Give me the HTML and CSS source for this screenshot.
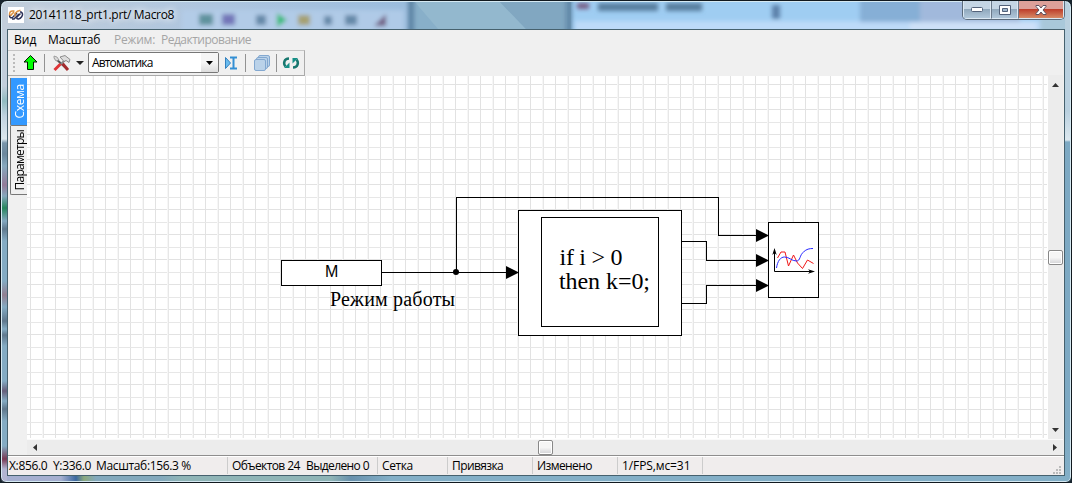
FILE: index.html
```html
<!DOCTYPE html>
<html lang="ru">
<head>
<meta charset="utf-8">
<title>20141118_prt1.prt/ Macro8</title>
<link rel="stylesheet" href="styles.css">
</head>
<body>
<div class="window">
  <header class="titlebar">
    <svg class="app-icon" width="16" height="16" viewBox="0 0 16 16"><rect width="16" height="16" fill="#fff"/><g fill="none" stroke-width="1.500"><path d="M6.500 4H4.500C2.500 4 1.500 5.500 1.500 7.500S2.500 9 4 7l2-2" stroke="#db9142"/><path d="M1.500 8.500c0 2 1.500 3 3.500 1.500l4-4M4 12h2l5-5" stroke="#2b3158"/><path d="M7 9.500V6.500Q10 3 12.500 3.500" stroke="#db9142"/><path d="M12 5h1c2 1 2 3 .5 5S9 13 8.500 10.500M12.500 6.500l-4 4" stroke="#2b3158"/></g></svg>
    <span class="title">20141118_prt1.prt/ Macro8</span>
    <svg class="reflection" width="1058" height="27" viewBox="7 2 1058 27">
      <path d="M410 1h165v28H410z" fill="#88afc9"/>
      <path d="M414 1h85l27 28h-88z" fill="#93b8ce"/>
      <path d="M499 1h67v28h-40z" fill="#81a7c1"/>
      <path d="M571 1h494v28H571z" fill="#9fcdf2"/>
      <g filter="url(#soft)"><path d="M566 -4h6v38h-6zM408 -4h6v38h-6z" fill="#5f86a6"/><path d="M182 10h222v24H182z" fill="#b4cdea" opacity=".8"/><path d="M575 21h490v12H575z" fill="#bddaf8"/><path d="M577 3h12v6h-12z" fill="#775f86"/><path d="M598 3h60v8h-60zM666 3h36v8h-36z" fill="#587f9f"/><path d="M860 -3h60v25h-60z" fill="#86afd6"/><path d="M920 -3h100v25h-100z" fill="#a1b9dc"/><path d="M1040 -3h30v36h-30z" fill="#a9c8da"/><path d="M910 22h126v9H910z" fill="#cee1f8"/><path d="M772 5h8v14h-8z" fill="#5d82ab"/><path d="M199 14h14v11h-14z" fill="#5f929d"/><path d="M222 14h13v11h-13z" fill="#7376b8"/><path d="M256 15h10v10h-10zM324 16h8v9h-8zM345 15h12v10h-12z" fill="#6588a8"/><path d="M277 13l10 7-10 7z" fill="#30bb78"/><path d="M298 15h12v10h-12z" fill="#a6a070"/><path d="M374 26l12-12v12z" fill="#705c81"/></g>
      <filter id="soft" x="-5%" y="-50%" width="110%" height="200%"><feGaussianBlur stdDeviation="2"/></filter>
    </svg>
    <div class="controls">
      <span class="ctl"><svg width="12" height="5"><rect x=".5" y=".5" width="11" height="4" rx="1" fill="#fff" stroke="#53627a"/></svg></span>
      <span class="ctl"><svg width="12" height="10"><path d="M.5.5h11v9H.5z" fill="#fff" stroke="#53627a"/><path d="M3.500 3.500h5v3h-5z" fill="#9fb7cc" stroke="#53627a"/></svg></span>
      <span class="ctl close"><svg width="12" height="10" viewBox="0 0 12 10"><path d="M1 .5h3L6 3 8 .5h3v1L8 5l3 3.500v1H8L6 7 4 9.500H1v-1L4 5 1 1.500z" fill="#fff" stroke="#5d5260"/></svg></span>
    </div>
  </header>
  <main class="client">
    <nav class="menu"><span class="m-view">Вид</span><span class="m-scale">Масштаб</span><span class="muted m-mode">Режим:</span><span class="muted m-edit">Редактирование</span></nav>
    <div class="toolbar">
      <i class="grip"></i>
      <svg class="tools" width="297" height="24" viewBox="8 51 297 24">
        <path d="M30.500 55.500 37 62h-3.500v7.500h-6V62H24z" fill="#0f0" stroke="#001800" stroke-linejoin="round"/>
        <path d="M44.500 54v18M245.500 54v18M276.500 54v18" stroke="#929292"/>
        <path d="M55 58l12 11" stroke="#555" stroke-width="2"/><path d="M54 56l3 1 2 3-3 1-2-3z" fill="#d9d9d9" stroke="#888" stroke-width=".7"/>
        <path d="M62 63l6 7" stroke="#a42b2d" stroke-width="3"/><path d="M65 60 61 64" stroke="#888" stroke-width="2"/><path d="M54.500 70l6-6" stroke="#df3437" stroke-width="3"/>
        <path d="M60 57l5-1.500 5 4-1 3-3-2-2 1z" fill="#ddd" stroke="#777" stroke-width=".8"/>
        <path d="M76 61h8l-4 4z" fill="#222"/>
        <path d="M225.500 57.500v11l5-5.500z" fill="#69bbee" stroke="#3380bd"/><path d="M230 57.500h7M230 68.500h7M233.500 58v11" stroke="#338fd4" stroke-width="2" fill="none"/>
        <g fill="#bad2e9" stroke="#83a8d0"><rect x="258.500" y="55.500" width="11" height="11" rx="1.500"/><rect x="256.500" y="57.500" width="11" height="11" rx="1.500"/><rect x="254.500" y="59.500" width="11" height="11" rx="1.500"/></g>
        <g fill="none" stroke="#17776f" stroke-width="2.500"><path d="M289 58.500c-5 0-6 5-3.500 8M293 67.500c5 0 6-5 3.500-8"/></g><path d="M284 68h5.500v-5.500zM298 58h-5.500v5.500z" fill="#159087"/>
      </svg>
      <div class="combo"><span>Автоматика</span><b><svg width="7" height="4"><path d="M0 0h7L3.500 4z"/></svg></b></div>
    </div>
    <section class="workspace">
      <aside class="tabs"><div class="tab active"><span>Схема</span></div><div class="tab"><span>Параметры</span></div></aside>
      <svg class="canvas" width="1021" height="363" viewBox="27 76 1021 363">
        <defs><pattern id="grid" x="30" y="84" width="25" height="25" patternUnits="userSpaceOnUse"><path d="M0 0h1v25H0zM0 0h25v1H0z" fill="#e2e2e2"/><path d="M13 0h1v25h-1zM0 13h25v1H0z" fill="#e7e7e7"/><path d="M12 0h1v25h-1z" fill="#f6f6f6"/></pattern></defs>
        <rect x="27" y="76" width="1021" height="363" fill="#fff"/><rect x="27" y="76" width="1020" height="362" fill="url(#grid)"/>
        <g fill="#fff" stroke="#000" shape-rendering="crispEdges"><path d="M281.500 260.500h100v25h-100zM518.500 210.500h163v125h-163zM541.500 217.500h117v109h-117zM768.500 222.500h50v75h-50z"/><path fill="none" d="M381.500 272.500h125M456.500 272.500v-75h262v38h38M681.500 241.500h25v19h50M681.500 303.500h25v-18h50"/></g>
        <path d="M506 266v13l13-6.500zM756 229v13l13-6.500zM756 254v13l13-6.500zM756 279v13l13-6.500z"/><circle cx="456" cy="272" r="3"/>
        <g fill="none"><path d="M777.500 258l3.500-6h4l3.500 14 5-11 4 8 5 5.500 5-8.500 6 3.500" stroke="#f01818"/><path d="M776.500 268c1-7 4-11 8-11 5 0 7 4 12 4 4 0 3-6 7-9 3-3 6-3.500 9.500-3.500" stroke="#2828ff"/><path d="M774.500 250v21.500H812" stroke="#000"/></g><path d="M774.500 248l2.200 7-2.200-2-2.200 2zM815 271.500l-7 2.200 2-2.200-2-2.200z"/>
        <text class="letter" x="325" y="277">M</text><text class="caption" x="330" y="306" textLength="125">Режим работы</text><text class="code" x="559.500" y="265" textLength="63">if i &gt; 0</text><text class="code" x="559" y="289" textLength="91">then k=0;</text>
      </svg>
      <div class="scroll vertical"><svg width="7" height="4"><path d="M0 4h7L3.500 0z" fill="#333"/></svg><i></i><svg width="7" height="4"><path d="M0 0h7L3.500 4z" fill="#333"/></svg></div>
      <div class="scroll horizontal"><svg width="4" height="7"><path d="M4 0v7L0 3.500z" fill="#333"/></svg><i></i><svg width="4" height="7"><path d="M0 0v7l4-3.500z" fill="#333"/></svg></div>
    </section>
    <footer class="status">
      <div class="s-pos"><span class="s-x">X:856.0</span><span class="s-y">Y:336.0</span><span class="s-scale">Масштаб:156.3 %</span></div>
      <div class="s-count"><span class="s-obj">Объектов 24</span><span class="s-sel">Выделено 0</span></div>
      <div class="s-grid">Сетка</div><div class="s-snap">Привязка</div><div class="s-mod">Изменено</div><div class="s-fps">1/FPS,мс=31</div>
      <svg class="resize" width="8" height="8"><path d="M6 0h2v2H6zM3 3h2v2H3zM6 3h2v2H6zM0 6h2v2H0zM3 6h2v2H3zM6 6h2v2H6z" fill="#bbb"/></svg>
    </footer>
  </main>
</div>
</body>
</html>
```
FILE: styles.css
```css
* { box-sizing: border-box; }
body { margin: 0; background: #17242d; font: 12px "Open Sans", "Noto Sans", sans-serif; color: #000; overflow: hidden; }
svg { display: block; flex: none; }
span { white-space: nowrap; }
.window {
  width: 1072px; height: 483px; padding: 0 6px 6px; border: 1px solid #11191f; border-radius: 7px 7px 6px 6px;
  box-shadow: inset 0 0 0 1px #d5e9f2;
  background:
    linear-gradient(#c2cedb 0 85px, #92bbc0 100px, #c0d2df 115px, #dce8ee 138px, #7895aa 142px, #6b879c 153px, #86a8bd 165px, #937b98 184px, #86a8bd 195px, #27855d 207px, #83a7bf 220px, #60798e 228px, #84abc3 240px 280px, #927f91 294px, #84abc3 306px, #60788d 320px, #84abc3 328px, #60788d 334px, #84abc3 345px 380px, #675f7b 390px, #84abc3 400px, #60788d 408px, #84abc3 420px 445px, #783954 458px, #b1b5d2 468px) 0 0 / 6px 100% no-repeat,
    linear-gradient(90deg, #a5afd0 0 60px, #3c68a0 75px, #8ba87d 83px, #84a9bd 95px 160px, #8fb4b6 180px 330px, #6991ad 350px, #83afc7 390px) 0 100% / 100% 6px no-repeat,
    linear-gradient(#b9d0df 0 110px, #dce8ef 139px, #7da9c3 141px 420px, #83afc7);
}
.titlebar { height: 27px; display: flex; align-items: flex-start; position: relative; isolation: isolate; margin-top: 1px; background: linear-gradient(90deg, #c2cedb, #adc5df 20%, #9bbddd 37%); }
.app-icon { margin: 5px 0 0 1px; }
.title { margin: 4px 0 0 5px; line-height: 17px; letter-spacing: -.31px; text-shadow: 0 0 7px #fff, 0 0 9px #fff; }
.reflection { position: absolute; left: 0; top: 0; z-index: -1; }
.controls { margin: -1px 0 0 auto; width: 103px; height: 19px; display: flex; border: 1px solid #5b6b7b; border-top: 0; border-radius: 0 0 5px 5px; overflow: hidden; }
.ctl { width: 28px; height: 18px; display: flex; align-items: center; justify-content: center; border: 1px solid #dbe8f3; border-top: 0; background: linear-gradient(#c4d5e4 48%, #91a9bd 50%, #b0c7da); }
.ctl + .ctl { border-left-color: #6b7a8b; }
.close { width: 46px; background: linear-gradient(#dca099 47%, #be3f2c 50%, #d68a66); }
.client { height: 447px; border: 1px solid #46616e; background: #f0f0f0; display: flex; flex-direction: column; }
.menu { height: 20px; display: flex; line-height: 20px; padding-left: 6px; }
.m-view { width: 34px; }
.m-scale { width: 66px; letter-spacing: -.15px; }
.m-mode { width: 47px; letter-spacing: -.2px; }
.m-edit { letter-spacing: -.5px; }
.muted { color: #a5a5a5; }
.toolbar { width: 297px; height: 26px; border: 1px solid #aaa; border-left: 0; border-top-color: #c5c5c5; display: grid; }
.grip, .tools, .combo { grid-area: 1 / 1; }
.grip { width: 2px; height: 19px; margin: 3px 0 0 5px; background: repeating-linear-gradient(#bbb 0 2px, transparent 2px 4px); }
.combo { width: 131px; height: 21px; margin: 1px 0 0 80px; padding-left: 3px; border: 1px solid #777; border-radius: 2px; background: #fff; display: flex; align-items: center; justify-content: space-between; letter-spacing: -.85px; }
.combo b { width: 17px; height: 19px; display: flex; align-items: center; justify-content: center; background: linear-gradient(#f5f5f5 50%, #ddd); }
.workspace { height: 379px; display: grid; grid-template-columns: 19px 1021px 15px; grid-template-rows: 363px 16px; }
.canvas .letter { font: 16px "Liberation Sans", sans-serif; }
.canvas .caption { font: 20px "Liberation Serif", serif; }
.canvas .code { font: 24px "Liberation Serif", serif; }
.tabs { grid-row: 1 / 3; background: #f0f0f0; padding: 2px 0 0 2px; }
.tab { width: 17px; height: 69px; border: solid #777; border-width: 0 0 1px 1px; border-radius: 0 0 0 2px; display: flex; justify-content: center; align-items: center; }
.tab span { writing-mode: vertical-rl; transform: rotate(180deg); line-height: 17px; letter-spacing: -.75px; }
.tab.active { height: 48px; background: #3399ff; color: #fff; }
.tab.active span { letter-spacing: -.3px; }
.scroll { background: #ececec; display: flex; align-items: center; justify-content: space-between; }
.vertical { flex-direction: column; padding: 8px 0 7px; margin-top: -1px; }
.horizontal { grid-column: 2 / 4; padding: 0 6px; border-top: 1px solid #fafafa; }
.scroll i { width: 15px; height: 15px; border: 1px solid #888; border-radius: 2px; background: linear-gradient(#f5f5f5 50%, #d2d2d5); box-shadow: inset 0 0 0 1px #fff; }
.status { height: 20px; border-top: 1px solid #8e8e8e; box-shadow: inset 0 1px #fff; background: #f0eded; display: flex; padding-top: 1px; letter-spacing: -.6px; }
.status > div { height: 17px; display: flex; border-right: 1px solid #ccc; padding-left: 4px; line-height: 18px; }
.status .s-pos { width: 220px; padding-left: 1px; letter-spacing: -.35px; }
.s-x { width: 44px; }
.s-y { width: 43px; }
.s-count { width: 150px; }
.s-obj { width: 74px; }
.status .s-grid { width: 70px; letter-spacing: -.4px; }
.s-snap, .s-mod, .s-fps { width: 85px; }
.status .s-fps { letter-spacing: -.1px; }
.resize { margin: 9px 3px 0 auto; }
```
